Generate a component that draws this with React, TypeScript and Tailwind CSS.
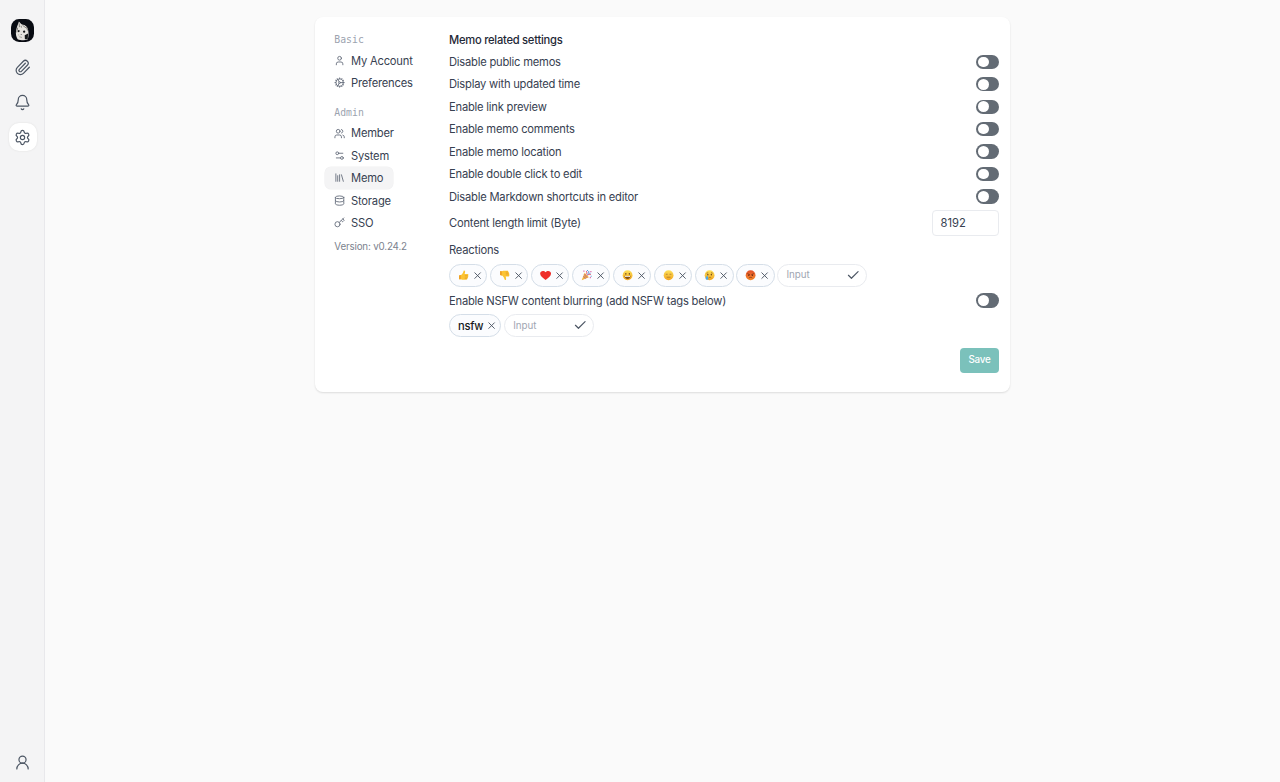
import type { ReactNode } from "react";
import {
  Bell,
  Check,
  Cog,
  Database,
  Key,
  Library,
  Paperclip,
  Settings,
  Settings2,
  User,
  UserRound,
  Users,
  X,
} from "lucide-react";

const face = "M8 1a7 7 0 1 0 0 14A7 7 0 0 0 8 1Z";

function FaceDefs() {
  return (
    <svg className="absolute h-0 w-0" aria-hidden="true">
      <defs>
        <linearGradient id="yellow" x1="0" y1="0" x2="0" y2="1">
          <stop offset="0" stopColor="#fde05a" />
          <stop offset="1" stopColor="#f3a51e" />
        </linearGradient>
        <linearGradient id="red" x1="0" y1="0" x2="0" y2="1">
          <stop offset="0" stopColor="#e2502a" />
          <stop offset="1" stopColor="#f58a2c" />
        </linearGradient>
      </defs>
    </svg>
  );
}

const thumb = (
  <>
    <path
      d="M1.5 8.2 5 7.4C6.6 5.8 7.6 3.9 8 1.8c.2-1 2-.9 2.2.6.2 1.300-.4 2.700-.8 3.900h4.300c1.500 0 1.600 1.900.5 2.200 1 .4.8 2-.3 2.200.7.6.4 1.800-.7 1.900.4.9-.2 1.700-1.200 1.700H7.200C5.800 14.300 4.600 13.500 1.500 13.600Z"
      fill="#fcc433"
    />
    <path d="M9.800 8.500h4M9.800 10.700h3.800M9.600 12.600h3.200" stroke="#dc8f1c" strokeWidth=".7" fill="none" />
    <path d="M1.500 8.200 4 7.700v5.900H1.500Z" fill="#ef9f25" />
  </>
);

const reactions: { name: string; art: ReactNode }[] = [
  { name: "thumbs up", art: thumb },
  { name: "thumbs down", art: <g transform="matrix(1 0 0 -1 0 16)">{thumb}</g> },
  {
    name: "heart",
    art: (
      <path
        d="M8 14.700C3.500 11.500.2 8.700.2 5.400.2 1.600 5.700.3 8 3.800c2.300-3.500 7.800-2.200 7.800 1.600 0 3.300-3.300 6.100-7.800 9.300Z"
        fill="#ee2f2b"
      />
    ),
  },
  {
    name: "party",
    art: (
      <>
        <path d="M1 15 5.200 4.600l6.100 6.200Z" fill="#f3b23c" />
        <path d="m3.300 9.500 3.600 3.200M4.500 6.800l4.400 5" stroke="#a8559f" strokeWidth="1.100" />
        <path d="M7 7c2-1.500 1.500-3.500.5-5M9 8.500c1.500-2 3-2 5-1.500" stroke="#e2526b" strokeWidth="1.400" fill="none" />
        <path d="M8.500 7.500c1.500-1 3-3 2.500-5.500" stroke="#5b8edb" strokeWidth="1.400" fill="none" />
        <path
          d="M3.300 1.300h1.700v1.700H3.300ZM13.300 2h1.700v1.700h-1.700ZM12.500 10.500h1.700v1.700h-1.700Z"
          fill="#d96ba9"
        />
        <path d="M12 4.600h1.500v1.500H12ZM13.800 8.600h1.500v1.500h-1.500ZM8.500.5H10V2H8.500Z" fill="#5b9bd8" />
      </>
    ),
  },
  {
    name: "grinning",
    art: (
      <>
        <path d={face} fill="url(#yellow)" />
        <ellipse cx="5.500" cy="6" rx=".9" ry="1.300" fill="#654019" />
        <ellipse cx="10.500" cy="6" rx=".9" ry="1.300" fill="#654019" />
        <path d="M3.500 8.700c3 .6 6 .6 9 0-.2 2.800-2 4.500-4.500 4.500S3.700 11.500 3.500 8.700Z" fill="#80501c" />
        <path d="M4.200 9.100c2.600.5 5 .5 7.600 0l-.4 1.500H4.600Z" fill="#fff" />
      </>
    ),
  },
  {
    name: "neutral",
    art: (
      <>
        <path d={face} fill="url(#yellow)" />
        <path d="M4 6.600h2.700M9.300 6.600H12M5.300 10.800h5.400" stroke="#94682a" strokeWidth=".9" />
      </>
    ),
  },
  {
    name: "crying",
    art: (
      <>
        <path d={face} fill="url(#yellow)" />
        <ellipse cx="5.500" cy="7" rx=".9" ry="1.200" fill="#654019" />
        <ellipse cx="10.500" cy="7" rx=".9" ry="1.200" fill="#654019" />
        <path d="M3.500 5.200 6 4.200M12.500 5.200 10 4.200M6.500 12c1-1.500 3-1.500 4 0" stroke="#805018" strokeWidth=".8" fill="none" />
        <path d="M4.300 8.500c1 1.800 1.900 2.900 1.900 4.200 0 2.500-3.900 2.500-3.900 0 0-1.300 1-2.400 2-4.200Z" fill="#4fa9e6" />
      </>
    ),
  },
  {
    name: "angry",
    art: (
      <>
        <path d={face} fill="url(#red)" />
        <ellipse cx="5.500" cy="8" rx=".9" ry="1.100" fill="#55200f" />
        <ellipse cx="10.500" cy="8" rx=".9" ry="1.100" fill="#55200f" />
        <path d="m3.300 5.600 3.700 1.600M12.700 5.600 9 7.200M5.500 12c1.500-1.200 3.500-1.200 5 0" stroke="#6b2810" strokeWidth=".9" fill="none" />
      </>
    ),
  },
];

const toggles = [
  "Disable public memos",
  "Display with updated time",
  "Enable link preview",
  "Enable memo comments",
  "Enable memo location",
  "Enable double click to edit",
  "Disable Markdown shortcuts in editor",
];

function Toggle() {
  return (
    <button className="flex h-[14.4px] w-[22.6px] shrink-0 items-center rounded-full bg-[#636b74] pl-[2px]">
      <span className="h-[10.6px] w-[10.6px] rounded-full bg-white" />
    </button>
  );
}

function ToggleRow({ label }: { label: string }) {
  return (
    <div className="flex h-[16.8px] items-center justify-between">
      <span className="pt-px">{label}</span>
      <Toggle />
    </div>
  );
}

function TagInput() {
  return (
    <div className="flex h-[22.9px] w-[90px] items-center justify-between rounded-full border border-[#e9ebef] bg-white pr-[5.5px] pl-[8px] text-[#9fa6b2]">
      <span className="pt-px text-[9.8px] tracking-normal">Input</span>
      <Check className="h-[14.5px] w-[14.5px] text-[#4b5563]" strokeWidth={1.9} />
    </div>
  );
}

function Chip({ children }: { children: ReactNode }) {
  return (
    <div className="flex h-[22.9px] items-center gap-[2.7px] rounded-full border border-[#d5dee8] bg-[#fbfcfe] pr-[3.2px] pl-[8px]">
      {children}
      <X className="h-[11.2px] w-[11.2px] text-[#4b5563]" strokeWidth={2} />
    </div>
  );
}

function NavItem({ icon, label, active }: { icon: ReactNode; label: string; active?: boolean }) {
  return (
    <div
      className={
        active
          ? "flex h-[22.45px] items-center gap-[5.6px] rounded-[6px] bg-[#f4f4f5] px-[9.3px] shadow-[0_0_0_0.6px_#f1f1f2]"
          : "flex h-[22.45px] items-center gap-[5.6px] px-[9.3px]"
      }
    >
      <span className="text-[#6b7280] [&>svg]:h-[11.2px] [&>svg]:w-[11.2px]">{icon}</span>
      <span className="pt-px">{label}</span>
    </div>
  );
}

function Avatar() {
  return (
    <svg viewBox="0 0 24 24" className="h-[23px] w-[23px]">
      <rect width="24" height="24" rx="8.500" fill="#080b12" />
      <path
        d="M8.300 2.500c1.300 1.700 2 2.400 3.200 3.200 3.500.3 5.900 2.500 6.500 6.200.5 3.300.4 6.800-.6 9.600-3.200 1-7.700.8-10.500-.5-1.500-2.300-2.200-5.500-1.600-8.700C5.800 9 7 6 8.300 2.500Z"
        fill="#e6e4df"
      />
      <path d="m8.500 4.500.3 4M12 6.500l4 3M7 9l-1 5M16.300 8.500l1 3.500M10.500 7l.4 2" stroke="#65635f" strokeWidth=".8" />
      <path d="M8 11.500c1.300-.3 1.500 2.300 0 2.200s-1-1.900 0-2.200ZM13.500 12c1.600-.4 2 2.300.3 2.300s-1.700-1.800-.3-2.300ZM10 15.700l1.300.2-.7.9ZM14.300 17l3.500-2-.3 6-3 .2Z" fill="#151718" />
      <path d="m8.500 18.500 3 .8M7.500 16.500l1 .3" stroke="#8d8a84" strokeWidth=".7" />
    </svg>
  );
}

export default function App() {
  return (
    <div className="flex h-[782px] w-[1280px] overflow-hidden bg-[#fafafa] font-['Inter',sans-serif] text-[11.2px] leading-[16.8px] tracking-[-0.22px] text-[#374151]">
      <FaceDefs />
      <aside className="flex w-[45px] shrink-0 flex-col items-center border-r border-[#e8e8eb] bg-[#f4f4f5] pt-[19px] pb-[11px] pl-px text-[#4b5563]">
        <Avatar />
        <Paperclip className="mt-[17px] h-[17px] w-[17px]" strokeWidth={1.7} />
        <Bell className="mt-[18px] h-[17px] w-[17px]" strokeWidth={1.7} />
        <div className="mt-[12px] flex h-[28px] w-[28px] items-center justify-center rounded-[10px] bg-white shadow-[0_0_2px_#ddd]">
          <Settings className="h-[17px] w-[17px]" strokeWidth={1.7} />
        </div>
        <UserRound className="mt-auto h-[17px] w-[17px]" strokeWidth={1.7} />
      </aside>

      <main className="flex flex-1 items-start pt-[17px] pl-[270px]">
        <section className="flex h-[375.3px] w-[695px] rounded-[8px] bg-white shadow-[0_1px_2px_rgba(0,0,0,0.12)]">
          <nav className="flex w-[134px] shrink-0 flex-col items-start pt-[15.200px] pl-[10px]">
            <div className="h-[17px] pt-px pl-[9.3px] font-['DejaVu_Sans_Mono',monospace] text-[9.8px] leading-[14px] tracking-normal text-[#9ca3af]">
              Basic
            </div>
            <NavItem icon={<User strokeWidth={2} />} label="My Account" />
            <NavItem icon={<Cog strokeWidth={2} />} label="Preferences" />
            <div className="mt-[11px] h-[16.9px] pt-px pl-[9.3px] font-['DejaVu_Sans_Mono',monospace] text-[9.8px] leading-[14px] tracking-normal text-[#9ca3af]">
              Admin
            </div>
            <NavItem icon={<Users strokeWidth={2} />} label="Member" />
            <NavItem icon={<Settings2 strokeWidth={2} />} label="System" />
            <NavItem icon={<Library strokeWidth={2} />} label="Memo" active />
            <NavItem icon={<Database strokeWidth={2} />} label="Storage" />
            <NavItem icon={<Key strokeWidth={2} />} label="SSO" />
            <div className="mt-[6px] pl-[9.3px] text-[9.8px] leading-[14px] tracking-[-0.17px] text-[#7b828e]">Version: v0.24.2</div>
          </nav>

          <div className="flex w-[550px] flex-col gap-[5.65px] pt-[14px]">
            <div className="h-[16.8px] pt-[0.5px] font-medium tracking-[-0.26px] text-[#1f2937]">Memo related settings</div>
            {toggles.map((label) => (
              <ToggleRow key={label} label={label} />
            ))}
            <div className="flex h-[25.5px] items-center justify-between">
              <span>Content length limit (Byte)</span>
              <div className="flex h-[26px] w-[67.500px] items-center rounded-[4px] border border-[#e9ebef] bg-white pt-px pl-[8px] tracking-normal">
                8192
              </div>
            </div>
            <div className="h-[16.8px]">Reactions</div>
            <div className="flex h-[22.4px] items-center gap-[2.8px]">
              {reactions.map(({ name, art }) => (
                <Chip key={name}>
                  <svg viewBox="0 0 16 16" className="h-[12.5px] w-[11.2px] shrink-0 overflow-visible" role="img" aria-label={name}>
                    {art}
                  </svg>
                </Chip>
              ))}
              <TagInput />
            </div>
            <ToggleRow label="Enable NSFW content blurring (add NSFW tags below)" />
            <div className="flex h-[22.4px] items-center gap-[2.8px]">
              <Chip>
                <span className="pt-px font-medium tracking-[-0.3px] text-[#171a1c]">nsfw</span>
              </Chip>
              <TagInput />
            </div>
            <button className="mt-[5.400px] flex h-[25.5px] w-[39px] items-center justify-center self-end rounded-[4px] bg-[#7bc1bb] text-[9.8px] font-medium text-white">
              Save
            </button>
          </div>
        </section>
      </main>
    </div>
  );
}
